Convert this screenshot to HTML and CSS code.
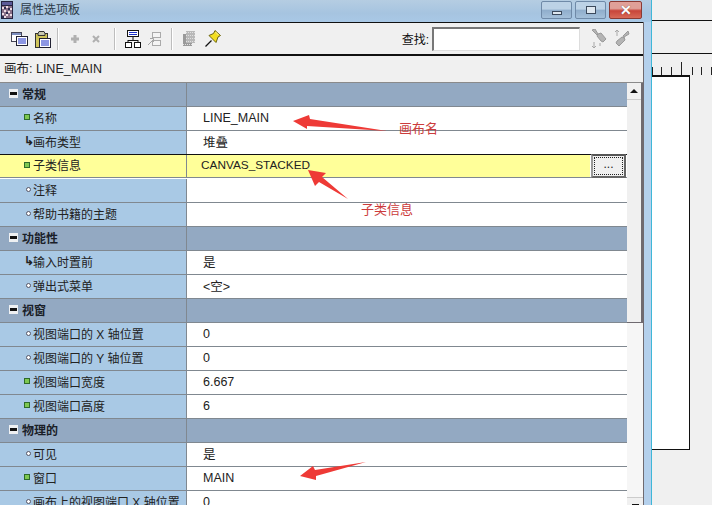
FILE: index.html
```html
<!DOCTYPE html>
<html lang="zh">
<head>
<meta charset="utf-8">
<title>属性选项板</title>
<link rel="stylesheet" href="styles.css">
</head>
<body>
<div class="desktop">
  <div class="window">
    <div class="titlebar">
      <svg class="app-icon" width="12" height="18" viewBox="0 0 12 18"><rect width="12" height="18" fill="#23233f"/><rect x="1" y="1" width="10" height="3" fill="#5a5a98"/><rect x="1" y="5" width="10" height="12" fill="#8a7088"/><path d="M1 6h2v2H1zM5 5h2v2H5zM9 7h2v2H9zM3 9h2v2H3zM7 10h2v2H7zM1 12h2v2H1zM5 13h2v2H5zM9 13h2v2H9zM3 15h2v2H3z" fill="#ecdde4"/><path d="M3 6h2v2H3zM7 7h2v2H7zM5 11h2v2H5zM1 15h2v2H1z" fill="#2c2c50"/></svg>
      <span class="title">属性选项板</span>
      <div class="caption">
        <span class="cap cap-min"><i></i></span>
        <span class="cap cap-max"><i></i></span>
        <span class="cap cap-close">✕</span>
      </div>
    </div>
    <div class="inner">
      <div class="toolbar">
        <div class="tgroup g1">
          <svg width="17" height="14" viewBox="0 0 17 14"><rect x=".5" y=".5" width="10" height="9" fill="#fff" stroke="#445"/><path d="M1 1h9v2H1z" fill="#7d8fc0"/><rect x="5.500" y="4.500" width="11" height="9" fill="#fff" stroke="#223"/><path d="M7 7h8M7 9h8M7 11h8" stroke="#1a2fc8"/></svg>
          <svg width="16" height="18" viewBox="0 0 16 18"><rect x=".5" y="3.500" width="12" height="14" fill="#cfc45a" stroke="#333"/><path d="M3 3.500l1-2h5l1 2v2H3z" fill="#c9c9b0" stroke="#333"/><rect x="4.500" y="8.500" width="11" height="9" fill="#fff" stroke="#223"/><path d="M6 11h8M6 13h8M6 15h8" stroke="#1a2fc8"/></svg>
        </div>
        <span class="sep sep-a"></span>
        <div class="tgroup g2">
          <svg width="12" height="12" viewBox="0 0 12 12"><path d="M6 2v8M2 6h8" stroke="#b0b0b0" stroke-width="3"/></svg>
          <svg width="12" height="12" viewBox="0 0 12 12"><path d="M3 3l6 6M9 3l-6 6" stroke="#b0b0b0" stroke-width="2"/></svg>
        </div>
        <span class="sep sep-b"></span>
        <div class="tgroup g3">
          <svg width="16" height="18" viewBox="0 0 16 18"><rect x="2.500" y=".5" width="11" height="6" fill="#fff" stroke="#111"/><path d="M4 2.500h8M4 4.500h8" stroke="#1a2fc8"/><path d="M8 7v3M3 10.500h10M3 10v2M13 10v2" stroke="#111" fill="none"/><rect x=".5" y="12.500" width="6" height="5" fill="#fff" stroke="#111"/><rect x="9.500" y="12.500" width="6" height="5" fill="#fff" stroke="#111"/></svg>
          <svg width="14" height="14" viewBox="0 0 14 14"><rect x="5.500" y=".5" width="8" height="5" fill="#f4f4f4" stroke="#aaa"/><rect x="5.500" y="8.500" width="8" height="5" fill="#f4f4f4" stroke="#aaa"/><path d="M1 13L6 8M3 6.500h3.500V10" stroke="#a5a5a5" fill="none"/></svg>
        </div>
        <span class="sep sep-c"></span>
        <div class="tgroup g4">
          <svg width="12" height="15" viewBox="0 0 12 15"><rect x="0" y="3" width="9" height="12" fill="#9a9a9a"/><rect x="3" y="0" width="9" height="12" fill="#b8b8b8"/><path d="M3 1.500h9M3 4.500h9M3 7.500h9M3 10.500h9M0 13.500h9" stroke="#e0e0e0" stroke-dasharray="1 1"/></svg>
          <svg width="16" height="17" viewBox="0 0 16 17"><path d="M.5 16.500l6-6" stroke="#111" stroke-width="1.300"/><path d="M10 .5l5.500 5-2.500 1.500-2 5.500-7-7 4.500-2z" fill="#f2de1e" stroke="#6b6410"/><path d="M10.500 2l3 3" stroke="#fff6a0"/></svg>
        </div>
        <div class="search">
          <label class="search-label">查找:</label>
          <input class="search-input" type="text">
          <div class="tgroup g5">
            <svg width="18" height="20" viewBox="0 0 18 20"><path d="M2 1l3-1 3 5 3-1 5 6-3 3-2-1-4-5 1-2-1 1z" fill="#b4b4b4" stroke="#999"/><path d="M4 13v6M2 17l2 2 2-2M10 14v3" stroke="#a8a8a8" fill="none"/></svg>
            <svg width="18" height="20" viewBox="0 0 18 20"><path d="M16 2l1 3-5 3 1 3-6 6-3-3 1-2 5-4 2 1-1-2z" fill="#b4b4b4" stroke="#999"/><path d="M5 1v6M3 3l2-2 2 2" stroke="#a8a8a8" fill="none"/></svg>
          </div>
        </div>
      </div>
      <div class="crumb">画布: LINE_MAIN</div>
      <div class="sheet">
        <div class="rows">
          <div class="row head"><div class="k"><span class="minus"></span>常规</div><div class="v"></div></div>
          <div class="row"><div class="k"><span class="mark green"></span>名称</div><div class="v">LINE_MAIN</div></div>
          <div class="row"><div class="k"><span class="mark arrow">↳</span>画布类型</div><div class="v">堆叠</div></div>
          <div class="row sel"><div class="k"><span class="mark green"></span>子类信息</div><div class="v">CANVAS_STACKED<button class="more" type="button"><span>...</span></button></div></div>
          <div class="row"><div class="k"><span class="mark dot"></span>注释</div><div class="v"></div></div>
          <div class="row"><div class="k"><span class="mark dot"></span>帮助书籍的主题</div><div class="v"></div></div>
          <div class="row head"><div class="k"><span class="minus"></span>功能性</div><div class="v"></div></div>
          <div class="row"><div class="k"><span class="mark arrow">↳</span>输入时置前</div><div class="v">是</div></div>
          <div class="row"><div class="k"><span class="mark dot"></span>弹出式菜单</div><div class="v">&lt;空&gt;</div></div>
          <div class="row head"><div class="k"><span class="minus"></span>视窗</div><div class="v"></div></div>
          <div class="row"><div class="k"><span class="mark dot"></span>视图端口的 X 轴位置</div><div class="v">0</div></div>
          <div class="row"><div class="k"><span class="mark dot"></span>视图端口的 Y 轴位置</div><div class="v">0</div></div>
          <div class="row"><div class="k"><span class="mark green"></span>视图端口宽度</div><div class="v">6.667</div></div>
          <div class="row"><div class="k"><span class="mark green"></span>视图端口高度</div><div class="v">6</div></div>
          <div class="row head"><div class="k"><span class="minus"></span>物理的</div><div class="v"></div></div>
          <div class="row"><div class="k"><span class="mark dot"></span>可见</div><div class="v">是</div></div>
          <div class="row"><div class="k"><span class="mark green"></span>窗口</div><div class="v">MAIN</div></div>
          <div class="row"><div class="k"><span class="mark dot"></span>画布上的视图端口 X 轴位置</div><div class="v">0</div></div>
        </div>
        <div class="scrollbar">
          <div class="sb-upper">
            <div class="sb-btn"><i></i></div>
          </div>
          <div class="sb-lower">
            <div class="sb-next"><i></i></div>
          </div>
        </div>
      </div>
    </div>
  </div>
  <div class="backdrop">
    <div class="back-top"></div>
    <div class="back-bar"></div>
    <div class="back-body">
      <div class="ruler"><svg width="60" height="14" viewBox="0 0 60 14"><path d="M.5 6v8M9.500 6v8M19.500 6v8M29.500 1v13M40.500 6v8M49.500 6v8M59.500 6v8" stroke="#222"/></svg></div>
      <div class="canvas"></div>
    </div>
  </div>
  <svg class="arrows" width="712" height="505" viewBox="0 0 712 505">
    <path d="M293 121L309 115 310 119 387 131 307 126 307 129z" fill="#ee3a36"/>
    <path d="M308 170L326 173 322 177 348 199 319 182 315 186z" fill="#ee3a36"/>
    <path d="M300 476L313 466 315 470 366 462 316 476 316 480z" fill="#ee3a36"/>
  </svg>
  <span class="note note-a">画布名</span>
  <span class="note note-b">子类信息</span>
</div>
</body>
</html>
```
FILE: styles.css
```css
* { box-sizing: border-box; }
html, body { margin: 0; padding: 0; }
body {
  width: 712px;
  height: 505px;
  overflow: hidden;
  font-family: "Liberation Sans", "Noto Sans CJK SC", sans-serif;
  font-size: 12px;
  color: #1a1a1a;
}
.desktop {
  position: relative;
  display: flex;
  width: 712px;
  height: 505px;
  overflow: hidden;
  background: #f0f0f0;
}
.window {
  flex: 0 0 652px;
  height: 505px;
  display: flex;
  flex-direction: column;
  background: #b4d0ec;
  border-right: 1px solid #3fb7d8;
}
.titlebar {
  flex: 0 0 22px;
  display: flex;
  align-items: flex-start;
  padding: 1px 9px 0 1px;
  background: linear-gradient(#b5cde2, #a6c4e0 60%, #a9c8e6);
}
.app-icon { margin-right: 7px; }
.title { color: #2c3a48; font-size: 12px; line-height: 17px; margin-top: 1px; }
.caption {
  margin-left: auto;
  display: flex;
  gap: 3px;
}
.cap {
  display: flex;
  align-items: center;
  justify-content: center;
  width: 31px;
  height: 18px;
  border: 1px solid #6f8aa8;
  border-radius: 2px;
  background: linear-gradient(#bcd2e6 45%, #8fadcb 50%, #a4c0da);
}
.cap i { display: block; background: #dfe8f0; border: 1px solid #3c4a5c; }
.cap-min i { width: 10px; height: 4px; margin-top: 5px; }
.cap-max i { width: 10px; height: 8px; }
.cap-close {
  width: 33px;
  border-color: #8a3a34;
  background: linear-gradient(#e0a098 40%, #c8453a 55%, #d86a58);
  color: #fff;
  font-weight: bold;
  font-size: 14px;
  text-shadow: 0 0 1px #5a2a24;
}
.inner {
  flex: 1;
  display: flex;
  flex-direction: column;
  min-height: 0;
  width: 644px;
  background: #f0f0f0;
  border-right: 1px solid #6f6a70;
}
.toolbar {
  flex: 0 0 34px;
  display: flex;
  align-items: center;
  padding-left: 11px;
  background: #f0f0f0;
  border-top: 1px solid #111;
  border-bottom: 2px solid #111;
}
.toolbar svg { display: block; flex: none; }
.tgroup { display: flex; align-items: center; }
.g1 { gap: 7px; }
.g2 { gap: 9px; }
.g3 { gap: 6px; }
.g4 { gap: 10px; }
.g5 { gap: 4px; }
.sep {
  flex: none;
  width: 1px;
  height: 22px;
  background: #bdbdbd;
  box-shadow: 1px 0 #fff;
}
.sep-a { margin: 0 11px 0 6px; }
.sep-b { margin: 0 10px 0 12px; }
.sep-c { margin: 0 11px 0 10px; }
.search { margin-left: auto; display: flex; align-items: center; padding-right: 13px; }
.search-label { font-size: 12px; color: #111; margin-right: 3px; }
.search-input {
  width: 148px;
  height: 24px;
  margin-right: 10px;
  border: 1px solid #ddd;
  border-top: 2px solid #777;
  border-left: 2px solid #777;
  background: #fff;
}
.crumb {
  flex: 0 0 27px;
  display: flex;
  align-items: center;
  padding: 0 0 3px 4px;
  font-size: 12.500px;
  background: #f0f0f0;
  border-bottom: 1px solid #8a8a8a;
  color: #222;
}
.sheet {
  flex: 1;
  display: flex;
  min-height: 0;
}
.rows {
  width: 627px;
  flex: none;
  overflow: hidden;
  background: #fff;
}
.row {
  display: flex;
  height: 24px;
  border-bottom: 1px solid #808890;
}
.k {
  flex: 0 0 187px;
  display: flex;
  align-items: center;
  padding: 0 0 3px 24px;
  background: #a9c9e5;
  border-right: 1px solid #808890;
  white-space: nowrap;
  color: #222;
}
.v {
  flex: 1;
  display: flex;
  align-items: center;
  padding: 0 0 2px 16px;
  font-size: 12.500px;
  color: #222;
}
.head .k, .head .v { background: #93a9c2; }
.head .k { padding-left: 9px; font-weight: bold; color: #1a2028; }
.sel {
  background: #fff;
  border-top: 1px solid #111;
  border-bottom: 1px solid #fff;
  margin-top: -1px;
  height: 25px;
}
.sel .k, .sel .v { background: #ffff99; border-bottom: 1px solid #808890; }
.sel .v {
  position: relative;
  padding-left: 14px;
  font-size: 11.800px;
  box-shadow: inset -37px 0 #fff;
}
.minus {
  flex: none;
  position: relative;
  width: 9px;
  height: 9px;
  margin-right: 4px;
  background: #eef0f2;
}
.minus::after {
  content: "";
  position: absolute;
  left: 1px;
  top: 3px;
  width: 7px;
  height: 3px;
  background: #111;
}
.mark {
  flex: none;
  width: 9px;
  height: 9px;
  display: flex;
  align-items: center;
  font-size: 12px;
  font-weight: bold;
  line-height: 9px;
}
.green {
  width: 6px;
  height: 6px;
  margin-right: 3px;
  background: #7ec850;
  border: 1px solid #2e6a2a;
}
.dot::before {
  content: "";
  width: 3px;
  height: 3px;
  margin-left: 2px;
  border: 1px solid #556;
  border-radius: 50%;
  background: #fff;
}
.more {
  position: absolute;
  right: 1px;
  top: -1px;
  width: 35px;
  height: 24px;
  padding: 1px;
  background: #f0f0f0;
  border: 2px solid #666;
  border-top-color: #555;
  border-left-color: #999;
  font: 12px "Liberation Sans", sans-serif;
  color: #222;
}
.more span {
  display: block;
  height: 100%;
  border: 1px dotted #222;
  line-height: 12px;
}
.scrollbar {
  flex: 0 0 16px;
  display: flex;
  flex-direction: column;
  background: #f6f6f6;
}
.sb-upper {
  flex: 0 0 240px;
  background: #f0f0f0;
  border-right: 2px solid #6f6a70;
  border-bottom: 1px solid #6f6a70;
}
.sb-lower {
  flex: 1;
  display: flex;
  flex-direction: column;
  justify-content: flex-end;
}
.sb-btn, .sb-next {
  display: flex;
  justify-content: center;
  background: #f0f0f0;
}
.sb-btn {
  height: 17px;
  align-items: center;
  border-bottom: 1px solid #ccc;
}
.sb-next {
  height: 8px;
  align-items: flex-end;
  border-top: 1px solid #ccc;
}
.sb-btn i {
  width: 0;
  height: 0;
  border-left: 4px solid transparent;
  border-right: 4px solid transparent;
  border-bottom: 4px solid #111;
}
.sb-next i { width: 7px; height: 1px; background: #111; }
.backdrop { flex: 1; display: flex; flex-direction: column; }
.back-top { flex: 0 0 21px; border-bottom: 1px solid #111; }
.back-bar { flex: 0 0 33px; border-bottom: 1px solid #111; }
.back-body { flex: 1; display: flex; flex-direction: column; }
.ruler { height: 21px; padding-top: 7px; overflow: hidden; }
.ruler svg { display: block; }
.canvas {
  width: 38px;
  height: 375px;
  background: #fff;
  border-top: 2px solid #111;
  border-right: 1px solid #111;
  border-bottom: 1px solid #111;
}
.arrows { position: absolute; left: 0; top: 0; pointer-events: none; }
.note { position: absolute; color: #cc3c3c; font-size: 13px; line-height: 14px; white-space: nowrap; }
.note-a { left: 399px; top: 122px; }
.note-b { left: 361px; top: 203px; }
```
